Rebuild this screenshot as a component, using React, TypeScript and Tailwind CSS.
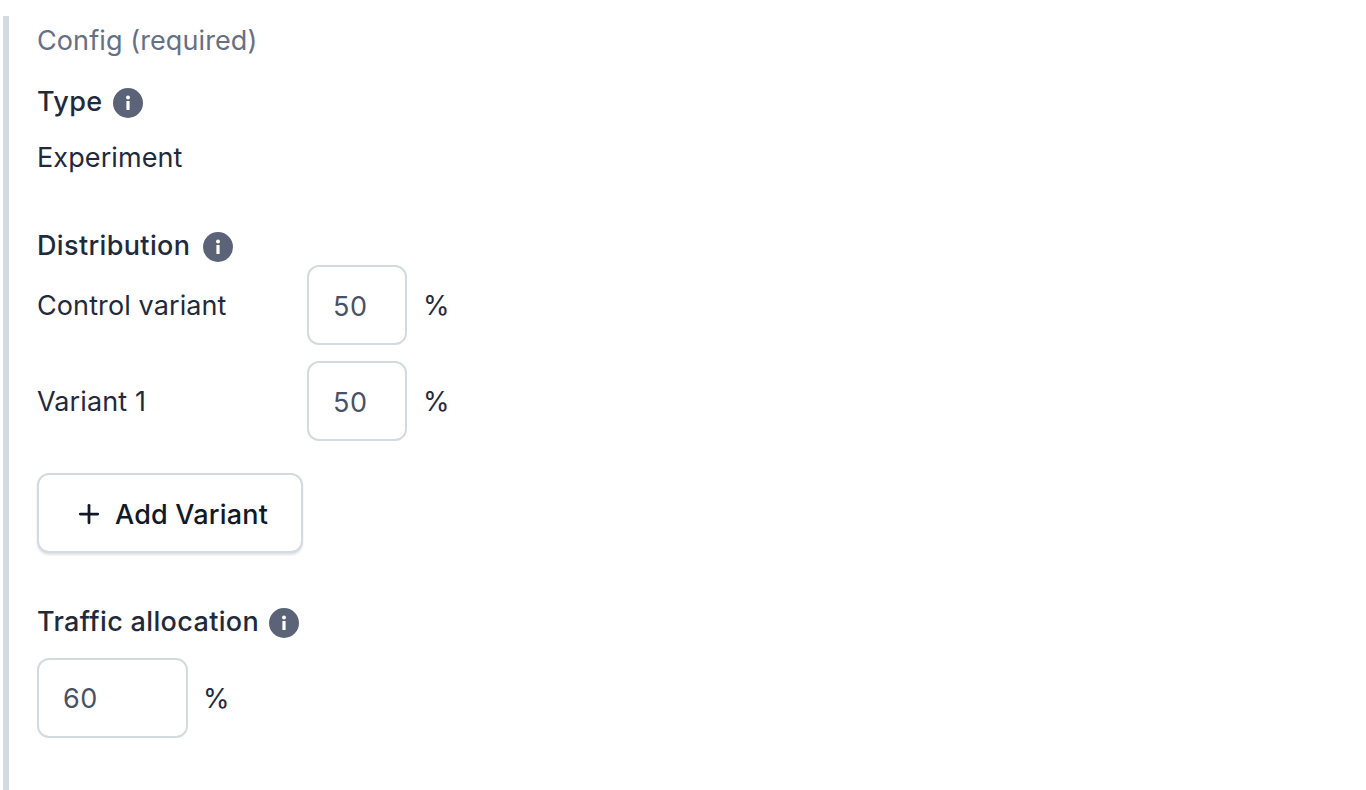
import { Plus } from 'lucide-react'

const font = { fontFamily: 'Inter, sans-serif' }

function InfoIcon() {
  return (
    <svg viewBox="0 0 30 30" className="mt-[2px] h-[30px] w-[30px] shrink-0">
      <circle cx="15" cy="15" r="15" fill="#5a6378" />
      <circle cx="15" cy="9.5" r="2" fill="#fff" />
      <rect x="13.4" y="13" width="3.2" height="9" rx="0.6" fill="#fff" />
    </svg>
  )
}

function Heading({ label, className }: { label: string; className: string }) {
  return (
    <div className={`flex items-center text-[27px] leading-[36px] font-[450] tracking-[0.35px] text-[#1f2a3c] ${className}`}>
      <span>{label}</span>
      <InfoIcon />
    </div>
  )
}

function VariantRow({ label, value, className }: { label: string; value: string; className: string }) {
  return (
    <div className={`flex items-center ${className}`}>
      <span className="w-[270px] pt-[2px] text-[27px] leading-[36px] tracking-[0.1px] text-[#1f2a3c]">{label}</span>
      <div className="flex h-20 w-[100px] items-center rounded-xl border-2 border-[#d3dbe1] pt-1 pl-[24px] text-[27px] tracking-[0.5px] text-[#475266]">
        {value}
      </div>
      <span className="ml-4 pt-[2px] text-[27px] text-[#1f2a3c]">%</span>
    </div>
  )
}

export default function App() {
  return (
    <div className="h-[790px] w-[1366px] overflow-hidden bg-white pt-4 pl-[3px]" style={font}>
      <div className="h-full border-l-[6px] border-[#d3dbe1] pl-[28px]">
        <div className="pt-[7px] text-[27px] leading-[36px] tracking-[0.1px] text-[#667085]">Config (required)</div>
        <Heading label="Type" className="mt-[25px] gap-[11px]" />
        <div className="mt-5 text-[27px] leading-[36px] tracking-[0.1px] text-[#1f2a3c]">Experiment</div>
        <Heading label="Distribution" className="mt-[52px] gap-[13px]" />
        <VariantRow label="Control variant" value="50" className="mt-[1px]" />
        <VariantRow label="Variant 1" value="50" className="mt-4" />
        <button className="mt-8 flex h-20 w-[266px] items-center rounded-xl border-2 border-[#d3dbe1] bg-white pl-[36px] text-[27px] font-[450] tracking-[0.2px] text-[#111827] shadow-[0_2px_2px_rgba(16,24,40,0.12)]">
          <Plus size={30} strokeWidth={2.2} className="mt-[2px] -ml-[1px]" />
          <span className="ml-[11px] pt-1">Add Variant</span>
        </button>
        <Heading label="Traffic allocation" className="mt-[51px] gap-[10px]" />
        <div className="mt-[18px] flex items-center">
          <div className="flex h-20 w-[151px] items-center rounded-xl border-2 border-[#d3dbe1] pt-[3px] pl-[24px] text-[27px] tracking-[0.5px] text-[#475266]">
            60
          </div>
          <span className="ml-[15px] pt-[2px] text-[27px] text-[#1f2a3c]">%</span>
        </div>
      </div>
    </div>
  )
}
